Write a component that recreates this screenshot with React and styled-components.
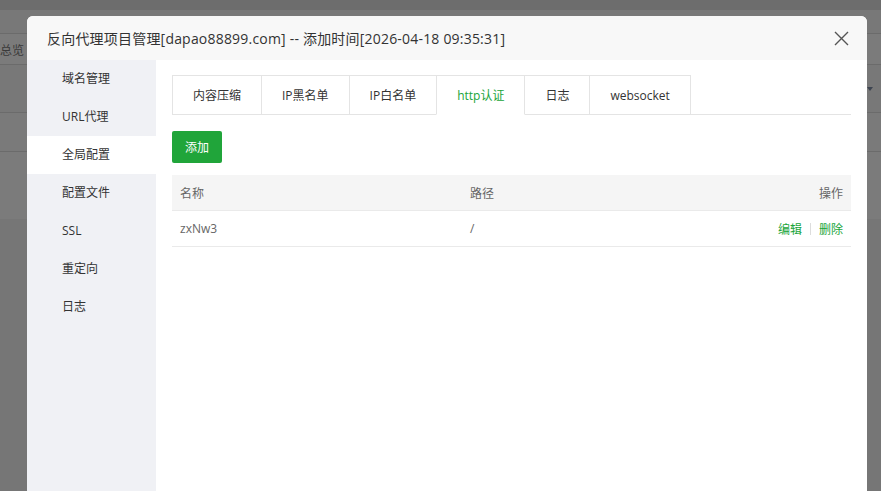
import React from "react";
import styled, { createGlobalStyle } from "styled-components";

const GlobalStyle = createGlobalStyle`
    html, body {
        margin: 0;
        padding: 0;
        height: 100%;
        overflow: hidden;
    }

    body {
        background: #777777;
        font-family: "Open Sans", "Noto Sans CJK SC", sans-serif;
        font-size: 12px;
        color: #333;
    }
`

const Page = styled.div`
    position: relative;
    width: 881px;
    height: 491px;
    overflow: hidden;
    background: #767676;
`

const PageBand = styled.div`
    height: ${props => props.h}px;
    background: ${props => props.bg};
    border-bottom: ${props => props.line ? "1px solid #6b6b6b" : "none"};
    display: flex;
    align-items: center;
    justify-content: space-between;
    color: #3a3a3a;
    font-size: 12px;
`

const BackLabel = styled.span`
    margin-left: 0;
    padding-top: 2px;
`

const Caret = styled.span`
    width: 0;
    height: 0;
    margin-right: 8px;
    border-left: 3px solid transparent;
    border-right: 3px solid transparent;
    border-top: 4px solid #3d4450;
`

const Modal = styled.div`
    position: absolute;
    left: 27px;
    top: 16px;
    width: 840px;
    height: 500px;
    background: #fff;
    border-radius: 6px 6px 0 0;
    display: flex;
    flex-direction: column;
    overflow: hidden;
`

const Header = styled.div`
    height: 44px;
    flex-shrink: 0;
    background: #f8f8f8;
    display: flex;
    align-items: center;
    justify-content: space-between;
    padding: 0 18px 0 20px;
    font-size: 14px;
    letter-spacing: 0.2px;
    color: #333;
`

const CloseButton = styled.button`
    border: none;
    background: none;
    padding: 0;
    width: 16px;
    height: 16px;
    display: flex;
    align-items: center;
    justify-content: center;
    cursor: pointer;
`

const Body = styled.div`
    flex: 1;
    display: flex;
    min-height: 0;
`

const Sidebar = styled.ul`
    list-style: none;
    margin: 0;
    padding: 0;
    width: 129px;
    flex-shrink: 0;
    background: #f0f1f5;
`

const SideItem = styled.li`
    height: 38px;
    line-height: 38px;
    padding-left: 35px;
    font-size: 12px;
    color: #333;
    background: ${props => props.active ? "#fff" : "transparent"};
    cursor: pointer;
`

const Content = styled.div`
    flex: 1;
    padding: 15px 16px 0 16px;
`

const Tabs = styled.div`
    display: flex;
    border-bottom: 1px solid #e4e4e4;
    height: 39px;
`

const Tab = styled.div`
    box-sizing: border-box;
    padding: 0 20px;
    display: flex;
    align-items: center;
    border: 1px solid #e4e4e4;
    border-bottom: ${props => props.active ? "1px solid #fff" : "none"};
    margin-left: ${props => props.first ? "0" : "-1px"};
    height: ${props => props.active ? "40px" : "39px"};
    color: ${props => props.active ? "#20a53a" : "#333"};
    background: #fff;
    font-size: 12px;
    cursor: pointer;
`

const AddButton = styled.button`
    margin-top: 16px;
    height: 32px;
    width: 50px;
    border: none;
    border-radius: 2px;
    background: #20a53a;
    color: #fff;
    font-family: inherit;
    font-size: 12px;
    cursor: pointer;
`

const Table = styled.table`
    margin-top: 12px;
    width: 100%;
    border-collapse: collapse;
    font-size: 12px;
    color: #666;

    th, td {
        height: 35px;
        padding: 0 8px;
        text-align: left;
        border-bottom: 1px solid #eaeaea;
        font-weight: normal;
    }

    th {
        background: #f5f5f5;
        color: #666;
    }

    .name {
        width: 274px;
    }

    .right {
        text-align: right;
    }
`

const Action = styled.a`
    color: #20a53a;
    text-decoration: none;
    cursor: pointer;
`

const Divider = styled.span`
    display: inline-block;
    width: 1px;
    height: 12px;
    background: #ddd;
    margin: 0 8px;
    vertical-align: -1px;
`

const sideItems = ["域名管理", "URL代理", "全局配置", "配置文件", "SSL", "重定向", "日志"]
const tabs = ["内容压缩", "IP黑名单", "IP白名单", "http认证", "日志", "websocket"]

const App = () => {
    return (
        <Page>
            <GlobalStyle />
            <PageBand h={10} bg="#6d6d6d" />
            <PageBand h={23} bg="#787878" line />
            <PageBand h={30} bg="#7b7b7b" line>
                <BackLabel>总览</BackLabel>
            </PageBand>
            <PageBand h={47} bg="#787878" line>
                <span />
                <Caret />
            </PageBand>
            <PageBand h={38} bg="#7a7a7a" line />
            <PageBand h={67} bg="#7b7b7b" />

            <Modal>
                <Header>
                    <span>反向代理项目管理[dapao88899.com] -- 添加时间[2026-04-18 09:35:31]</span>
                    <CloseButton>
                        <svg width="15" height="15" viewBox="0 0 15 15">
                            <path d="M1 1 L14 14 M14 1 L1 14" stroke="#555" strokeWidth="1.4" fill="none" />
                        </svg>
                    </CloseButton>
                </Header>
                <Body>
                    <Sidebar>
                        {sideItems.map((item, key) =>
                            <SideItem key={key} active={item === "全局配置"}>{item}</SideItem>
                        )}
                    </Sidebar>
                    <Content>
                        <Tabs>
                            {tabs.map((tab, key) =>
                                <Tab key={key} first={key === 0} active={tab === "http认证"}>{tab}</Tab>
                            )}
                        </Tabs>
                        <AddButton>添加</AddButton>
                        <Table>
                            <thead>
                                <tr>
                                    <th className="name">名称</th>
                                    <th>路径</th>
                                    <th className="right">操作</th>
                                </tr>
                            </thead>
                            <tbody>
                                <tr>
                                    <td>zxNw3</td>
                                    <td>/</td>
                                    <td className="right">
                                        <Action>编辑</Action>
                                        <Divider />
                                        <Action>删除</Action>
                                    </td>
                                </tr>
                            </tbody>
                        </Table>
                    </Content>
                </Body>
            </Modal>
        </Page>
    )
}

export default App;
